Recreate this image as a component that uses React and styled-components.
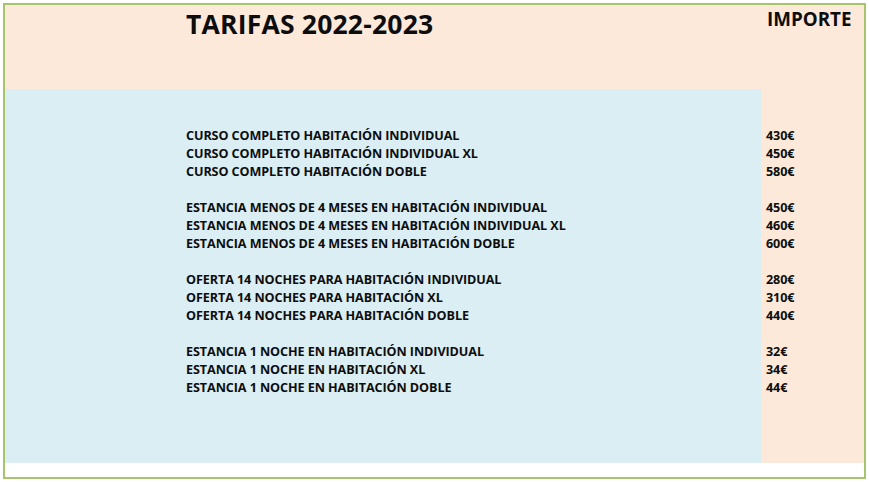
import React from 'react';
import styled, { createGlobalStyle } from 'styled-components';

const GlobalStyle = createGlobalStyle`
  html, body {
    margin: 0;
    padding: 0;
    background: #ffffff;
  }
  body {
    font-family: 'Open Sans', 'Liberation Sans', sans-serif;
    color: #0d0d0d;
  }
`;

const PEACH = '#fde9d9';
const BLUE = '#daeef3';

const Frame = styled.div`
  box-sizing: border-box;
  width: 863px;
  height: 476px;
  margin: 3px 0 0 3px;
  border: 2px solid #a8c46a;
  display: flex;
  flex-direction: column;
  background: #ffffff;
`;

const Sheet = styled.div`
  display: grid;
  grid-template-columns: 756px 1fr;
  grid-template-rows: 84px 374px;
`;

const Header = styled.div`
  background: ${PEACH};
  padding-left: ${p => p.$indent}px;
  padding-top: ${p => p.$top}px;
`;

const Title = styled.h1`
  margin: 0;
  font-size: 26.5px;
  line-height: 30px;
  font-weight: 700;
  letter-spacing: 0.2px;
`;

const ColumnHead = styled.h2`
  margin: 0;
  font-size: 18.8px;
  line-height: 22px;
  font-weight: 700;
  letter-spacing: 0;
`;

const Column = styled.div`
  background: ${p => (p.$tone === 'blue' ? BLUE : PEACH)};
  padding: 38px 0 0 ${p => p.$indent}px;
  display: flex;
  flex-direction: column;
`;

const Line = styled.div`
  height: 18px;
  font-size: 12.6px;
  line-height: 18px;
  font-weight: 700;
  letter-spacing: -0.08px;
  white-space: nowrap;
`;

const Footer = styled.div`
  flex: 1;
  background: #ffffff;
`;

const groups = [
  [
    ['CURSO COMPLETO HABITACIÓN INDIVIDUAL', '430€'],
    ['CURSO COMPLETO HABITACIÓN INDIVIDUAL XL', '450€'],
    ['CURSO COMPLETO HABITACIÓN DOBLE', '580€'],
  ],
  [
    ['ESTANCIA MENOS DE 4 MESES EN HABITACIÓN INDIVIDUAL', '450€'],
    ['ESTANCIA MENOS DE 4 MESES EN HABITACIÓN INDIVIDUAL XL', '460€'],
    ['ESTANCIA MENOS DE 4 MESES EN HABITACIÓN DOBLE', '600€'],
  ],
  [
    ['OFERTA 14 NOCHES PARA HABITACIÓN INDIVIDUAL', '280€'],
    ['OFERTA 14 NOCHES PARA HABITACIÓN XL', '310€'],
    ['OFERTA 14 NOCHES PARA HABITACIÓN DOBLE', '440€'],
  ],
  [
    ['ESTANCIA 1 NOCHE EN HABITACIÓN INDIVIDUAL', '32€'],
    ['ESTANCIA 1 NOCHE EN HABITACIÓN XL', '34€'],
    ['ESTANCIA 1 NOCHE EN HABITACIÓN DOBLE', '44€'],
  ],
];

// flatten with a blank line between groups
const lines = groups.flatMap((g, i) => (i === 0 ? g : [['', ''], ...g]));

export default function App() {
  return (
    <>
      <GlobalStyle />
      <Frame>
        <Sheet>
          <Header $indent={181} $top={4}>
            <Title>TARIFAS 2022-2023</Title>
          </Header>
          <Header $indent={6} $top={3}>
            <ColumnHead>IMPORTE</ColumnHead>
          </Header>
          <Column $tone="blue" $indent={181}>
            {lines.map(([label], i) => (
              <Line key={i}>{label}</Line>
            ))}
          </Column>
          <Column $tone="peach" $indent={5}>
            {lines.map(([, price], i) => (
              <Line key={i}>{price}</Line>
            ))}
          </Column>
        </Sheet>
        <Footer />
      </Frame>
    </>
  );
}
